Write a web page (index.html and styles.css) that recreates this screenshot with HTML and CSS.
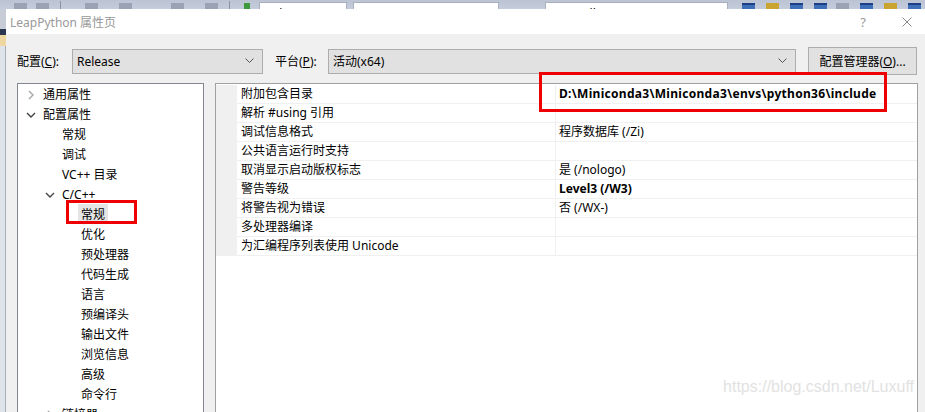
FILE: index.html
```html
<!DOCTYPE html>
<html lang="zh-CN">
<head>
    <meta charset="UTF-8">
    <meta name="viewport" content="width=device-width, initial-scale=1.0">
    <title>LeapPython 属性页</title>
    <link rel="stylesheet" href="styles.css">
</head>
<body>
    <!-- barra de herramientas del IDE detras del dialogo -->
    <div class="ide-bar">
        <span class="tb-icon grey" style="margin-left:14px"></span>
        <span class="tb-icon grey"></span>
        <span class="tb-sep"></span>
        <span class="tb-icon grey" style="margin-left:20px"></span>
        <span class="tb-icon grey" style="margin-left:18px"></span>
        <span class="tb-icon grey" style="margin-left:36px"></span>
        <span class="tb-icon grey" style="margin-left:18px"></span>
        <span class="tb-sep"></span>
        <span class="tb-icon green"></span>
        <span class="tb-combo" style="width:88px;margin-left:6px">Release</span>
        <span class="tb-combo" style="width:146px">x64</span>
        <span class="tb-combo" style="width:183px;margin-left:46px">Controller</span>
        <span class="tb-icon blue" style="margin-left:14px"></span>
        <span class="tb-icon gold"></span>
        <span class="tb-icon blue"></span>
        <span class="tb-icon blue"></span>
        <span class="tb-icon grey"></span>
        <span class="tb-icon blue"></span>
        <span class="tb-icon gold"></span>
        <span class="tb-icon blue"></span>
    </div>

    <div class="window">
        <div class="ide-side">
            <div class="side-a"></div>
            <div class="side-b"></div>
            <div class="side-c"></div>
            <div class="side-d"></div>
        </div>

        <div class="dialog">
            <div class="titlebar">
                <span class="title">LeapPython 属性页</span>
                <span class="help">?</span>
                <svg class="close" width="10" height="10" viewBox="0 0 10 10">
                    <path d="M0.5 0.5 L9.5 9.5 M9.5 0.5 L0.5 9.5" stroke="#8a8a8a" stroke-width="1" fill="none"/>
                </svg>
            </div>

            <div class="config-row">
                <label class="cfg-label">配置(<u>C</u>):</label>
                <div class="select" style="width:191px">
                    <span>Release</span>
                    <svg width="9" height="6" viewBox="0 0 9 6"><path d="M0.5 0.5 L4.5 4.5 L8.5 0.5" stroke="#555" fill="none"/></svg>
                </div>
                <label class="cfg-label plat">平台(<u>P</u>):</label>
                <div class="select" style="width:468px">
                    <span>活动(x64)</span>
                    <svg width="9" height="6" viewBox="0 0 9 6"><path d="M0.5 0.5 L4.5 4.5 L8.5 0.5" stroke="#555" fill="none"/></svg>
                </div>
                <button class="btn">配置管理器(<u>O</u>)...</button>
            </div>

            <div class="main">
                <div class="tree">
                    <div class="node lv1">
                        <svg class="chev" width="10" height="10" viewBox="0 0 10 10"><path d="M3 1 L7 5 L3 9" stroke="#a6a6a6" stroke-width="1.4" fill="none"/></svg>
                        通用属性
                    </div>
                    <div class="node lv1">
                        <svg class="chev" width="10" height="10" viewBox="0 0 10 10"><path d="M1 3 L5 7 L9 3" stroke="#444" stroke-width="1.4" fill="none"/></svg>
                        配置属性
                    </div>
                    <div class="node lv2">常规</div>
                    <div class="node lv2">调试</div>
                    <div class="node lv2">VC++ 目录</div>
                    <div class="node lv2 open">
                        <svg class="chev" width="10" height="10" viewBox="0 0 10 10"><path d="M1 3 L5 7 L9 3" stroke="#444" stroke-width="1.4" fill="none"/></svg>
                        C/C++
                    </div>
                    <div class="node lv3"><span class="selected marked">常规</span></div>
                    <div class="node lv3">优化</div>
                    <div class="node lv3">预处理器</div>
                    <div class="node lv3">代码生成</div>
                    <div class="node lv3">语言</div>
                    <div class="node lv3">预编译头</div>
                    <div class="node lv3">输出文件</div>
                    <div class="node lv3">浏览信息</div>
                    <div class="node lv3">高级</div>
                    <div class="node lv3">命令行</div>
                    <div class="node lv2">
                        <svg class="chev" width="10" height="10" viewBox="0 0 10 10"><path d="M3 1 L7 5 L3 9" stroke="#a6a6a6" stroke-width="1.4" fill="none"/></svg>
                        链接器
                    </div>
                </div>

                <div class="grid">
                    <div class="row">
                        <div class="gutter"></div>
                        <div class="name">附加包含目录</div>
                        <div class="value bold marked-value">D:\Miniconda3\Miniconda3\envs\python36\include</div>
                    </div>
                    <div class="row">
                        <div class="gutter"></div>
                        <div class="name">解析 #using 引用</div>
                        <div class="value"></div>
                    </div>
                    <div class="row">
                        <div class="gutter"></div>
                        <div class="name">调试信息格式</div>
                        <div class="value">程序数据库 (/Zi)</div>
                    </div>
                    <div class="row">
                        <div class="gutter"></div>
                        <div class="name">公共语言运行时支持</div>
                        <div class="value"></div>
                    </div>
                    <div class="row">
                        <div class="gutter"></div>
                        <div class="name">取消显示启动版权标志</div>
                        <div class="value">是 (/nologo)</div>
                    </div>
                    <div class="row">
                        <div class="gutter"></div>
                        <div class="name">警告等级</div>
                        <div class="value bold">Level3 (/W3)</div>
                    </div>
                    <div class="row">
                        <div class="gutter"></div>
                        <div class="name">将警告视为错误</div>
                        <div class="value">否 (/WX-)</div>
                    </div>
                    <div class="row">
                        <div class="gutter"></div>
                        <div class="name">多处理器编译</div>
                        <div class="value"></div>
                    </div>
                    <div class="row">
                        <div class="gutter"></div>
                        <div class="name">为汇编程序列表使用 Unicode</div>
                        <div class="value"></div>
                    </div>
                    <div class="grid-rest">
                        <div class="gutter"></div>
                    </div>
                    <span class="watermark">https://blog.csdn.net/Luxuff</span>
                </div>
            </div>
        </div>
    </div>
</body>
</html>
```

FILE: styles.css
```css
body {
    margin: 0;
    padding: 0;
    width: 925px;
    height: 412px;
    overflow: hidden;
    font-family: "Noto Sans", "Noto Sans CJK SC", sans-serif;
    font-size: 12px;
    color: #000;
    background: #cfd6e5;
}
u {
    text-decoration: underline;
    text-underline-offset: 1px;
}

/* barra del IDE, el dialogo la tapa en parte */
.ide-bar {
    height: 24px;
    display: flex;
    align-items: flex-start;
    overflow: hidden;
    background: linear-gradient(#bcc4d4, #d3d9e6);
}
.tb-icon {
    width: 13px;
    height: 12px;
    margin: 3px 3px 0 6px;
    background: #8e99ab;
    flex: none;
}
.tb-icon.green {
    width: 6px;
    background: #3f9a3f;
    margin-left: 10px;
}
.tb-icon.blue {
    background: #3f6fb8;
    border-top: 2px solid #1d3f86;
    height: 10px;
    margin-left: 8px;
}
.tb-icon.gold {
    background: #c9a431;
    margin-left: 8px;
}
.tb-icon.grey {
    background: #9aa3b3;
}
.tb-sep {
    width: 1px;
    height: 16px;
    margin: 1px 4px 0 8px;
    background: #8b93a3;
    flex: none;
}
.tb-combo {
    height: 20px;
    margin: 2px 0 0 6px;
    padding-left: 5px;
    box-sizing: border-box;
    background: #fff;
    border: 1px solid #a8b0bf;
    font-size: 12px;
    line-height: 22px;
    flex: none;
    overflow: hidden;
}

/* ventana */
.window {
    display: flex;
    height: 403px;
    margin-top: -15px;
    position: relative;
}
.ide-side {
    width: 6px;
    flex: none;
    display: flex;
    flex-direction: column;
}
.side-a {
    height: 20px;
    background: #c7ccd6;
}
.side-b {
    height: 6px;
    background: #2b3650;
}
.side-c {
    height: 11px;
    background: #eed7a0;
}
.side-d {
    flex: 1;
    background: linear-gradient(to right, #dfe3ea 0, #dfe3ea 5px, #a9adb5 5px);
}
.dialog {
    flex: 1;
    display: flex;
    flex-direction: column;
    background: #f0f0f0;
    min-height: 0;
}
.titlebar {
    height: 25px;
    flex: none;
    background: #fff;
    display: flex;
    align-items: center;
    padding-left: 4px;
    font-size: 12px;
}
.title {
    color: #999;
    flex: 1;
}
.help {
    color: #9a9a9a;
    font-size: 13px;
    margin-right: 36px;
}
.close {
    margin-right: 13px;
}

.config-row {
    height: 48px;
    box-sizing: border-box;
    flex: none;
    display: flex;
    align-items: center;
    padding: 6px 7px 0 11px;
}
.cfg-label {
    width: 55px;
    flex: none;
}
.cfg-label.plat {
    margin-left: 12px;
    width: 53px;
}
.select {
    height: 25px;
    box-sizing: border-box;
    background: #e1e1e1;
    border: 1px solid #adadad;
    display: flex;
    align-items: center;
    justify-content: space-between;
    padding: 0 8px 0 4px;
    flex: none;
}
.btn {
    margin-left: 12px;
    width: 109px;
    height: 28px;
    background: #e1e1e1;
    border: 1px solid #adadad;
    font-family: inherit;
    font-size: 12px;
    padding: 0;
    color: #000;
}

.main {
    flex: 1;
    min-height: 0;
    display: flex;
    gap: 11px;
    padding: 1px 7px 0 11px;
}

/* arbol */
.tree {
    width: 187px;
    flex: none;
    box-sizing: border-box;
    background: #fff;
    border: 1px solid #828790;
    border-bottom: 0;
    padding-top: 1px;
    overflow: hidden;
}
.node {
    height: 20px;
    line-height: 20px;
    white-space: nowrap;
    position: relative;
}
.node.lv1 {
    padding-left: 25px;
}
.node.lv2 {
    padding-left: 44px;
}
.node.lv3 {
    padding-left: 63px;
}
.chev {
    position: absolute;
    top: 5px;
}
.lv1 .chev {
    left: 8px;
}
.lv2 .chev {
    left: 27px;
}
.selected {
    background: #e5e5e5;
    padding: 2px 3px 1px;
    margin-left: -3px;
    position: relative;
}
.marked::after {
    content: "";
    position: absolute;
    left: -12px;
    top: -4px;
    width: 65px;
    height: 18px;
    border: 3px solid #ee0000;
}

/* rejilla de propiedades */
.grid {
    flex: 1;
    background: #fff;
    border: 1px solid #a0a0a0;
    border-bottom: 0;
    position: relative;
    display: flex;
    flex-direction: column;
}
.row {
    height: 18px;
    flex: none;
    display: flex;
    border-bottom: 1px solid #f0f0f0;
    line-height: 18px;
}
.row:first-child {
    margin-top: 1px;
}
.gutter {
    width: 21px;
    flex: none;
    background: #f0f0f0;
}
.name {
    width: 314px;
    flex: none;
    padding-left: 4px;
    border-right: 1px solid #f0f0f0;
    white-space: nowrap;
}
.value {
    flex: 1;
    padding-left: 3px;
    white-space: nowrap;
    position: relative;
}
.bold {
    font-weight: bold;
}
.marked-value {
    letter-spacing: 0.3px;
}
.marked-value::after {
    content: "";
    position: absolute;
    left: -17px;
    top: -13px;
    width: 342px;
    height: 34px;
    border: 3px solid #ee0000;
}
.grid-rest {
    flex: 1;
    display: flex;
}
.grid-rest .gutter {
    background: #fff;
}
.watermark {
    position: absolute;
    right: 3px;
    bottom: 16px;
    font-family: "Liberation Sans", Arial, sans-serif;
    font-size: 16px;
    color: #e2e2e2;
}
```
